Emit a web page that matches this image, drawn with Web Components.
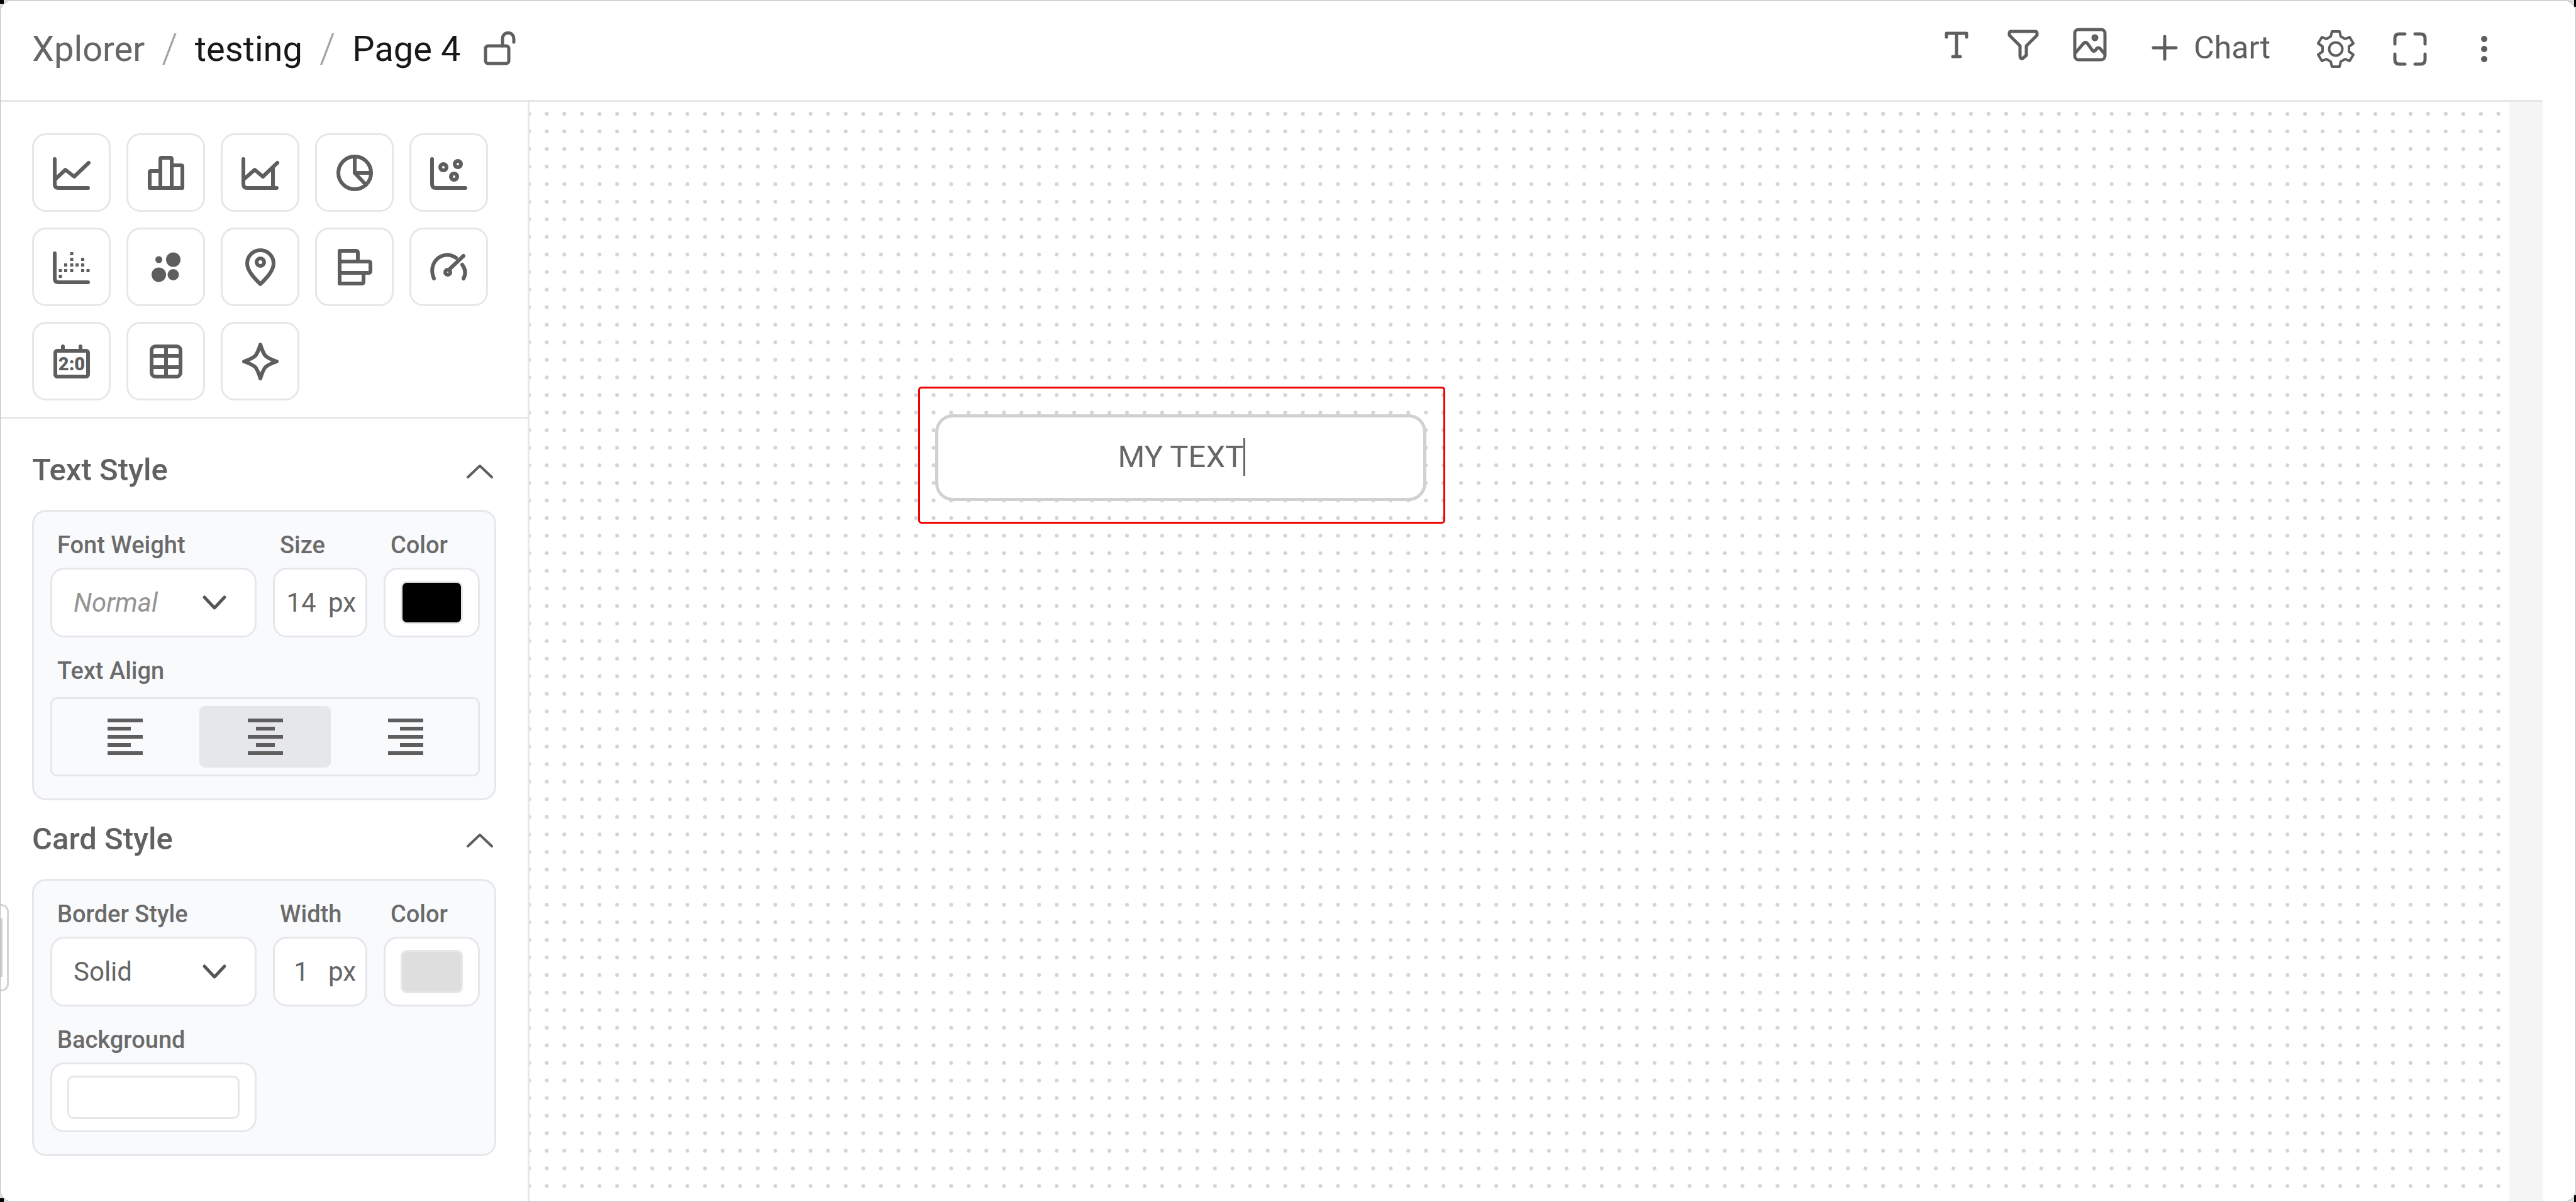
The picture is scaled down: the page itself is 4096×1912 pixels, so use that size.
<!DOCTYPE html>
<html lang="en">
<head>
<meta charset="utf-8">
<title>Xplorer – Page 4</title>
<style>
html, body { margin: 0; height: 100%; }
body {
  font-family: Roboto, "Liberation Sans", sans-serif;
  color: #666;
  background:
    linear-gradient(#000, #000) 0 0 / 6px 6px no-repeat,
    linear-gradient(#000, #000) 100% 0 / 3px 11px no-repeat,
    linear-gradient(#000, #000) 0 100% / 6px 6px no-repeat,
    linear-gradient(#000, #000) 100% 100% / 3px 11px no-repeat,
    #dcdcdc;
}
</style>
</head>
<body>
<xp-app></xp-app>
<script>
const define = (name, html, setup) => {
  const tpl = document.createElement('template');
  tpl.innerHTML = html;
  customElements.define(name, class extends HTMLElement {
    constructor() {
      super();
      this.attachShadow({ mode: 'open' });
    }
    connectedCallback() {
      if (this.shadowRoot.firstChild) return;
      this.shadowRoot.append(tpl.content.cloneNode(true));
      if (setup) setup.call(this, this.shadowRoot);
    }
  });
};

/* Every icon is drawn around the origin, in pixels. */
const AXIS = '<path d="M-27 -22V18Q-27 24 -21 24H26"/>';
const ICONS = {
  text: '<path d="M-16 -12V-18H16V-12M0 -18V18M-6 19H6"/>',
  filter: '<path d="M-19 -21H19Q22 -21 22 -18V-15L5 2V17L-1 22Q-5 23 -5 18V2L-22 -15V-18Q-22 -21 -19 -21Z"/>',
  image: '<rect x="-24" y="-24" width="48" height="48" rx="6"/><circle cx="8" cy="-11" r="3"/><path d="M-23 13L-10 -2Q-7 -5 -4 -2L4 9Q6 12 9 9L11 6Q13 4 16 6L23 14"/>',
  plus: '<path d="M-18 0H18M0 -18V18"/>',
  gear: '<g stroke-width="4"><path d="M-6 -28H6L8 -20L15 -16L22 -19L28 -9L21 -4V4L28 9L22 19L15 16L8 20L6 28H-6L-8 20L-15 16L-22 19L-28 9L-21 4V-4L-28 -9L-22 -19L-15 -16L-8 -20Z"/><circle r="10.5"/></g>',
  expand: '<path d="M-8 -24H-17Q-24 -24 -24 -17V-8M8 -24H17Q24 -24 24 -17V-8M-8 24H-17Q-24 24 -24 17V8M8 24H17Q24 24 24 17V8"/>',
  more: '<g fill="currentColor" stroke="none"><circle cy="-16" r="5"/><circle r="5"/><circle cy="16" r="5"/></g>',
  lock: '<rect x="-19" y="-5" width="37" height="28" rx="4"/><path d="M8 -5V-16C8 -29 26 -29 26 -16V-11"/>',
  line: AXIS + '<path d="M-26 10L-10 -5L4 6L27 -16"/>',
  bar: '<path d="M-26 24V-1Q-26 -3 -24 -3H-9M-9 24V-22Q-9 -24 -7 -24H7Q9 -24 9 -22V24M9 -12H24Q26 -12 26 -10V24M-26 24H26"/>',
  area: AXIS + '<path d="M-26 10L-9 -5L4 6L27 -16M20 -8V24"/>',
  pie: '<circle r="26"/><path d="M0 -26V0H26M0 0L18 19"/>',
  scatter: AXIS + '<circle cx="-9" cy="-9" r="5"/><circle cx="14" cy="-14" r="5"/><circle cx="8" cy="6" r="5"/>',
  histogram: AXIS + '<g stroke-width="5" stroke-linecap="butt" stroke-dasharray="5 4"><path d="M-18 3V18M-9.5 -6V8M0 -24V8M8.500 -6V0M17.500 -15V8M26 3V8"/></g>',
  bubbles: '<g fill="currentColor" stroke="none"><circle cx="-11.500" cy="-12" r="5.5"/><circle cx="11.500" cy="-12" r="11.5"/><circle cx="-11.500" cy="12" r="11.5"/><circle cx="11.500" cy="12" r="9"/></g>',
  pin: '<path d="M0 27C-9 18 -21 6 -21 -6A21 21 0 0 1 21 -6C21 6 9 18 0 27Z"/><circle cy="-8" r="6"/>',
  hbars: '<path d="M-24 -26H2Q5 -26 5 -23V-9H-24ZM-24 -9H22Q25 -9 25 -6V6Q25 9 22 9H-24ZM-24 9H14V23Q14 26 11 26H-24Z"/>',
  gauge: '<path d="M-24 18C-31 2 -24 -13 -11 -18Q0 -22 11 -15M21 -4Q29 7 23 18M1 3L23 -18"/><circle cx="-2" cy="8" r="4"/>',
  score: '<rect x="-26" y="-17" width="52" height="41" rx="3"/><path d="M-14 -24V-18M14 -24V-18"/><text y="14" text-anchor="middle" font-size="29" font-weight="900" fill="currentColor" stroke="none">2:0</text>',
  table: '<rect x="-23" y="-24" width="46" height="48" rx="6"/><path d="M0 -24V24M-23 -9H23M-23 9H23"/>',
  spark: '<path d="M0 -27Q4 -14 8 -9Q14 -4 26 0Q14 4 8 9Q4 14 0 27Q-4 14 -8 9Q-14 4 -26 0Q-14 -4 -8 -9Q-4 -14 0 -27Z"/>',
  up: '<path stroke-width="4" d="M-19 8L0 -10L19 8"/>',
  down: '<path d="M-16 -9L0 8L16 -9"/>',
  'align-left': '<path stroke-linecap="butt" d="M-28 -26H28M-28 -13H9M-28 0H28M-28 13H9M-28 26H28"/>',
  'align-center': '<path stroke-linecap="butt" d="M-28 -26H28M-15 -13H15M-28 0H28M-15 13H15M-28 26H28"/>',
  'align-right': '<path stroke-linecap="butt" d="M-28 -26H28M-9 -13H28M-28 0H28M-9 13H28M-28 26H28"/>'
};

define('xp-icon', `
<style>
:host { display: block; flex: none; width: 64px; height: 64px; }
svg { display: block; width: 100%; height: 100%; overflow: visible; stroke-width: var(--icon-stroke, 5); }
</style>
<svg fill="none" stroke="currentColor" stroke-linecap="round" stroke-linejoin="round" viewBox="-32 -32 64 64" aria-hidden="true"></svg>`,
function (root) {
  root.querySelector('svg').innerHTML = ICONS[this.getAttribute('name')];
});

define('xp-tool-button', `
<style>
:host { display: block; color: #5e5e5e; }
button {
  display: flex; align-items: center; justify-content: center;
  font: inherit; font-size: 50px; line-height: 60px; color: inherit; padding: 0; border: 0; background: none;
}
:host([boxed]) { --icon-stroke: 6; }
:host([boxed]) button {
  box-sizing: border-box; width: 125px; height: 125px;
  border: 3px solid #e5e7eb; border-radius: 22px; background: #fff;
}
:host([flat]) { --icon-stroke: 6; }
:host([flat]) button { width: 209px; height: 98px; border-radius: 9px; }
:host([flat]) button[aria-pressed="true"] { background: #e5e7eb; }
</style>
<button type="button"><slot></slot></button>`,
function (root) {
  const b = root.querySelector('button');
  const icon = document.createElement('xp-icon');
  icon.setAttribute('name', this.getAttribute('icon'));
  b.prepend(icon);
  b.setAttribute('aria-label', this.textContent.trim() || this.getAttribute('icon'));
  if (this.hasAttribute('flat')) b.setAttribute('aria-pressed', this.hasAttribute('active'));
});

define('xp-header', `
<style>
:host {
  display: flex; align-items: center; justify-content: space-between;
  box-sizing: border-box; height: 161px; margin-right: 52px; padding: 0 61px 4px 50px;
  border-bottom: 3px solid #e5e7eb;
}
nav, .tools, .group { display: flex; align-items: center; }
nav { font-size: 56px; line-height: 64px; color: #18181b; gap: 27px; }
a { color: inherit; text-decoration: none; }
a.root { color: #666; }
.sep { font-size: 64px; font-weight: 300; color: #a3a3a3; }
.tools { gap: 54px; }
.group { gap: 42px; padding-bottom: 14px; }
.chart { margin: 0 18px 0 1px; padding-bottom: 4px; }
.chart span { padding-left: 14px; }
</style>
<nav aria-label="Breadcrumb">
  <a class="root" href="#">Xplorer</a><span class="sep">/</span>
  <a href="#">testing</a><span class="sep">/</span>
  <a href="#">Page 4</a>
  <xp-tool-button icon="lock"></xp-tool-button>
</nav>
<div class="tools">
  <div class="group">
    <xp-tool-button icon="text"></xp-tool-button>
    <xp-tool-button icon="filter"></xp-tool-button>
    <xp-tool-button icon="image"></xp-tool-button>
  </div>
  <xp-tool-button class="chart" icon="plus"><span>Chart</span></xp-tool-button>
  <xp-tool-button icon="gear"></xp-tool-button>
  <xp-tool-button icon="expand"></xp-tool-button>
  <xp-tool-button icon="more"></xp-tool-button>
</div>`);

define('xp-palette', `
<style>
:host {
  display: grid; grid-template-columns: repeat(5, 125px); gap: 25px;
  padding: 50px 50px 26px; border-bottom: 3px solid #e5e7eb;
}
</style>`,
function (root) {
  for (const n of ['line', 'bar', 'area', 'pie', 'scatter', 'histogram', 'bubbles', 'pin', 'hbars', 'gauge', 'score', 'table', 'spark']) {
    const b = document.createElement('xp-tool-button');
    b.setAttribute('icon', n);
    b.setAttribute('boxed', '');
    root.append(b);
  }
});

define('xp-section', `
<style>
:host { display: block; }
header { display: flex; align-items: center; justify-content: space-between; margin-bottom: 33px; height: 60px; }
h2 { margin: 0; font-size: 49px; line-height: 60px; font-weight: 500; color: #616161; }
header xp-tool-button { padding-top: 6px; margin-right: -6px; }
.card {
  display: grid; grid-template-columns: 328px 150px 153px; gap: 31px 26px;
  padding: 31px 22px 35px 26px; border: 3px solid #e5e7eb; border-radius: 22px; background: #f9fafc;
}
</style>
<header><h2></h2><xp-tool-button icon="up"></xp-tool-button></header>
<div class="card"><slot></slot></div>`,
function (root) {
  root.querySelector('h2').textContent = this.getAttribute('heading');
});

define('xp-field', `
<style>
:host { display: block; min-width: 0; }
label, .label { display: block; padding-left: 11px; font-size: 38px; line-height: 44px; margin-bottom: 14px; font-weight: 500; color: #6b6b6b; white-space: nowrap; }
.box {
  display: grid; align-items: center; box-sizing: border-box; height: 111px;
  border: 3px solid #e5e7eb; border-radius: 22px; background: #fff; font-size: 42px;
}
select, input { font: inherit; color: inherit; border: 0; margin: 0; padding: 0; background: none; appearance: none; outline: 0; min-width: 0; }
.select > * { grid-area: 1 / 1; }
.select select { height: 100%; padding-left: 34px; }
.select xp-icon { justify-self: end; margin-right: 32px; pointer-events: none; color: #555; }
.placeholder select { font-style: italic; color: #949494; }
.number { grid-template-columns: 74px auto; justify-content: start; column-gap: 6px; padding-left: 5px; }
.number input { text-align: center; width: 74px; }
.color { padding: 18px 24px; }
.color input { width: 100%; height: 69px; }
.color input::-webkit-color-swatch-wrapper { padding: 0; }
.color input::-webkit-color-swatch { border: 3px solid #e5e7eb; border-radius: 10px; }
.group { display: flex; justify-content: space-between; box-sizing: border-box; margin-top: 20px; padding: 11px; border: 3px solid #e5e7eb; border-radius: 11px; }
</style>`,
function (root) {
  const kind = this.getAttribute('kind'), label = this.getAttribute('label'), value = this.getAttribute('value');
  const body = {
    select: `<div class="box select ${this.hasAttribute('placeholder') ? 'placeholder' : ''}"><select id="c"><option>${value}</option></select><xp-icon name="down"></xp-icon></div>`,
    number: `<div class="box number"><input id="c" type="text" inputmode="numeric" value="${value}"><span>px</span></div>`,
    color: `<div class="box color"><input id="c" type="color" value="${value}"></div>`,
    align: `<div class="group" role="group" aria-labelledby="l">
      <xp-tool-button flat icon="align-left"></xp-tool-button>
      <xp-tool-button flat active icon="align-center"></xp-tool-button>
      <xp-tool-button flat icon="align-right"></xp-tool-button></div>`
  }[kind];
  const head = kind === 'align' ? `<div class="label" id="l">${label}</div>` : `<label for="c">${label}</label>`;
  root.innerHTML += head + body;
});

define('xp-sidebar', `
<style>
:host { display: block; box-sizing: border-box; width: 841px; flex: none; border-right: 3px solid #e5e7eb; background: #fff; }
.panels { display: grid; gap: 32px; padding: 52px 50px; }
.wide { grid-column: 1 / -1; }
</style>
<xp-palette></xp-palette>
<div class="panels">
  <xp-section heading="Text Style">
    <xp-field kind="select" label="Font Weight" value="Normal" placeholder></xp-field>
    <xp-field kind="number" label="Size" value="14"></xp-field>
    <xp-field kind="color" label="Color" value="#000000"></xp-field>
    <xp-field class="wide" kind="align" label="Text Align"></xp-field>
  </xp-section>
  <xp-section heading="Card Style">
    <xp-field kind="select" label="Border Style" value="Solid"></xp-field>
    <xp-field kind="number" label="Width" value="1"></xp-field>
    <xp-field kind="color" label="Color" value="#dedede"></xp-field>
    <xp-field kind="color" label="Background" value="#ffffff"></xp-field>
  </xp-section>
</div>`);

define('xp-text-card', `
<style>
:host {
  display: flex; box-sizing: border-box; width: 838px; height: 218px; padding: 41px 27px 33px 24px;
  border: 3px solid #f20000; border-radius: 5px;
}
.card {
  flex: 1; display: flex; align-items: center; justify-content: center; padding-bottom: 3px;
  border: 5px solid #d1d1d1; border-radius: 28px; background: #fff;
}
.edit { position: relative; display: flex; }
input {
  field-sizing: content; font: inherit; font-size: 49px; line-height: 60px; color: #666;
  border: 0; padding: 0; background: none; outline: 0;
}
.caret { position: absolute; left: 100%; top: 0; bottom: 0; width: 3px; background: #666; }
</style>
<div class="card"><div class="edit"><input type="text" aria-label="Card text" value="MY TEXT"><span class="caret"></span></div></div>`);

define('xp-canvas', `
<style>
:host { display: block; position: relative; flex: 1; min-width: 0; overflow: hidden; background: #fff; }
svg { position: absolute; inset: 0; width: 100%; height: 100%; }
xp-text-card { position: absolute; left: 618px; top: 453px; }
</style>
<svg viewBox="0 0 1126 640" preserveAspectRatio="xMinYMin slice" aria-hidden="true">
  <pattern id="dots" x="4.800" y="1.800" width="10" height="10" patternUnits="userSpaceOnUse"><circle cx="5" cy="5" r="1.100" fill="#d4d4d4"/></pattern>
  <rect width="1126" height="640" fill="url(#dots)"/>
</svg>
<xp-text-card></xp-text-card>`);

define('xp-app', `
<style>
:host {
  display: flex; flex-direction: column; position: relative; box-sizing: border-box; height: 100vh;
  border: 1px solid #c0c0c0; border-radius: 20px; background: #fff; overflow: hidden;
}
main { flex: 1; min-height: 0; display: flex; margin-right: 52px; }
.gutter { width: 53px; background: #f5f5f5; }
.handle {
  position: absolute; left: -1px; top: 1437px; box-sizing: border-box; width: 14px; height: 139px; padding: 20px 0; cursor: pointer;
  border: 3px solid #d4d4d4; border-left: 0; border-radius: 0 12px 12px 0; background: #fff;
}
.handle::before { content: ""; display: block; width: 4px; height: 93px; background: #cfcfcf; }
</style>
<xp-header></xp-header>
<main>
  <xp-sidebar></xp-sidebar>
  <xp-canvas></xp-canvas>
  <div class="gutter"></div>
</main>
<button class="handle" type="button" aria-label="Open menu"></button>`);
</script>
</body>
</html>
